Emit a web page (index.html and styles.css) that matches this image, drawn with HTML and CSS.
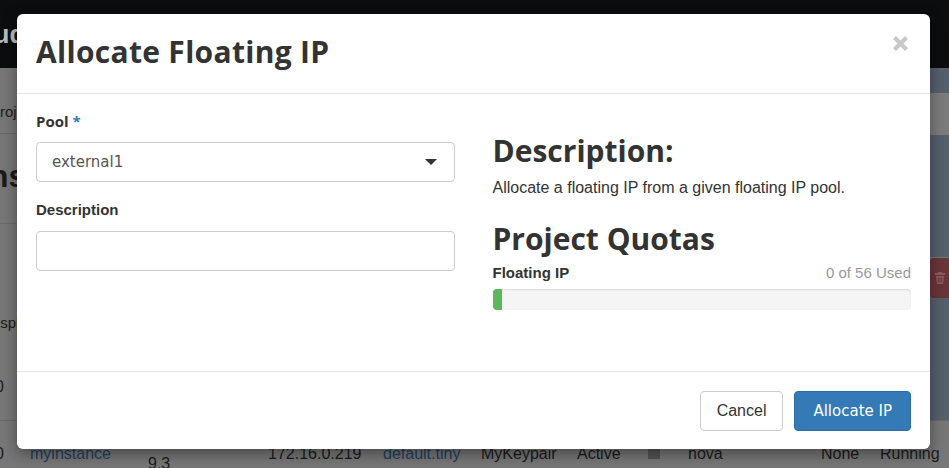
FILE: index.html
```html
<!DOCTYPE html>
<html lang="en">

<head>
    <meta charset="UTF-8">
    <meta name="viewport" content="width=device-width, initial-scale=1.0">
    <title>Allocate Floating IP</title>
    <link rel="stylesheet" href="styles.css">
</head>

<body>
    <!-- dimmed dashboard behind the modal -->
    <div class="page">
        <div class="navbar"><span class="brand">cloud</span></div>
        <div class="middle">
            <div class="main">
                <div class="crumb"><span>Project</span></div>
                <div class="page-title"><span>Instances</span></div>
                <div class="toolbar"></div>
                <div class="display-row"><span>Displaying</span></div>
                <div class="head-row"><span>0</span></div>
            </div>
            <div class="aside">
                <div class="aside-top"></div>
                <div class="aside-grey"></div>
                <div class="aside-mid"></div>
                <div class="aside-btn">
                    <svg width="10" height="12" viewBox="0 0 10 12"><rect x="0" y="1" width="10" height="2" fill="#8c5c60"/><rect x="3" y="0" width="4" height="2" fill="#8c5c60"/><path d="M1 4h8l-1 8H2z" fill="#8c5c60"/><path d="M3.5 5.5v5M5 5.5v5M6.5 5.5v5" stroke="#6a3236" stroke-width="0.8"/></svg>
                </div>
            </div>
        </div>
        <div class="table-row">
            <span class="c0">0</span>
            <span class="c-name">myinstance</span>
            <span class="c-img">9.3</span>
            <span class="c-ip">172.16.0.219</span>
            <span class="c-flavor">default.tiny</span>
            <span class="c-key">MyKeypair</span>
            <span class="c-status">Active</span>
            <span class="c-lock"></span>
            <span class="c-zone">nova</span>
            <span class="c-task">None</span>
            <span class="c-power">Running</span>
        </div>
    </div>

    <div class="modal">
        <div class="modal-header">
            <h3 class="modal-title">Allocate Floating IP</h3>
            <svg class="close" width="17" height="17" viewBox="0 0 17 17">
                <path d="M2.5 2.5l12 12M14.5 2.5l-12 12" stroke="#c8c8c8" stroke-width="4.2"/>
            </svg>
        </div>
        <div class="modal-body">
            <div class="col">
                <label class="field-label pool-label">Pool <span class="req">*</span></label>
                <div class="select">
                    <span>external1</span>
                    <span class="caret"></span>
                </div>
                <label class="field-label desc-label">Description</label>
                <div class="text-input"></div>
            </div>
            <div class="col right">
                <h3 class="side-title">Description:</h3>
                <p class="side-text">Allocate a floating IP from a given floating IP pool.</p>
                <h3 class="side-title quotas">Project Quotas</h3>
                <div class="quota-head">
                    <strong>Floating IP</strong>
                    <span class="used">0 of 56 Used</span>
                </div>
                <div class="progress">
                    <div class="progress-bar" style="width: 9px;"></div>
                </div>
            </div>
        </div>
        <div class="modal-footer">
            <button class="btn">Cancel</button>
            <button class="btn btn-primary">Allocate IP</button>
        </div>
    </div>
</body>

</html>
```

FILE: styles.css
```css
body {
    margin: 0;
    padding: 0;
    font-family: "Liberation Sans", Arial, sans-serif;
    font-size: 14px;
    color: #333;
    overflow: hidden;
}

/* page behind the modal, already dimmed */
.page {
    background-color: #777;
    height: 468px;
    color: #1b1b1b;
}

.navbar {
    height: 68px;
    background-color: #0c0d0e;
    display: flex;
    align-items: center;
}

.brand {
    margin-left: -44px;
    font-size: 26px;
    font-weight: bold;
    color: #bdbdbd;
}

.middle {
    display: flex;
    height: 352px;
}

.main {
    flex: 1;
}

.crumb {
    height: 66px;
    border-bottom: 1px solid #6a6a6a;
    font-size: 15px;
    padding-top: 35px;
    box-sizing: border-box;
}

.crumb span {
    margin-left: -10px;
}

.page-title {
    height: 90px;
    border-bottom: 1px solid #6a6a6a;
    font-size: 32px;
    font-weight: bold;
    padding-top: 24px;
    box-sizing: border-box;
}

.page-title span {
    margin-left: -20px;
}

.toolbar {
    height: 90px;
}

.display-row {
    height: 50px;
    font-size: 15px;
}

.display-row span {
    margin-left: -14px;
}

.head-row {
    height: 54px;
    font-size: 16px;
    padding-top: 14px;
    box-sizing: border-box;
}

.head-row span {
    margin-left: -5px;
}

.aside {
    width: 19px;
    display: flex;
    flex-direction: column;
    background-color: #55606d;
}

.aside-top {
    height: 25px;
}

.aside-grey {
    height: 42px;
    background-color: #7c7c7c;
}

.aside-mid {
    height: 123px;
    border-bottom: 1px solid #6f7883;
    box-sizing: border-box;
}

.aside-btn {
    height: 40px;
    background-color: #6a3438;
    border-radius: 4px 0 0 4px;
    display: flex;
    align-items: center;
    padding-left: 5px;
}

.table-row {
    height: 48px;
    border-top: 1px solid #6a6a6a;
    box-sizing: border-box;
    display: flex;
    align-items: flex-start;
    font-size: 16px;
    padding-top: 24px;
    white-space: nowrap;
}

.table-row span {
    display: inline-block;
}

.c0 { margin-left: -5px; width: 35px; }
.c-name { width: 118px; color: #1f3f60; }
.c-img { width: 120px; margin-top: 10px; }
.c-ip { width: 115px; }
.c-flavor { width: 98px; color: #1f3f60; }
.c-key { width: 96px; }
.c-status { width: 71px; }
.c-lock { width: 12px; height: 10px; background-color: #555; margin: 4px 28px 0 0; }
.c-zone { width: 133px; }
.c-task { width: 59px; }

/* modal */
.modal {
    position: absolute;
    left: 17px;
    top: 14px;
    width: 913px;
    background-color: #fff;
    border-radius: 6px;
    box-shadow: 0 5px 15px rgba(0, 0, 0, 0.4);
}

.modal-header {
    height: 80px;
    padding: 0 21px 0 19px;
    border-bottom: 1px solid #e5e5e5;
    box-sizing: border-box;
    display: flex;
    align-items: center;
    justify-content: space-between;
}

.modal-title {
    margin: 0;
    font-family: "Open Sans", sans-serif;
    font-weight: 700;
    font-size: 30px;
    line-height: 36px;
    color: #333;
    letter-spacing: 0.3px;
    padding-bottom: 4px;
}

.close {
    margin-top: -20px;
}

.modal-body {
    display: grid;
    grid-template-columns: 1fr 1fr;
    column-gap: 38px;
    padding: 17px 19px 0 19px;
    height: 277px;
    box-sizing: border-box;
}

.field-label {
    display: block;
    font-weight: bold;
    font-size: 15px;
    line-height: 20px;
    color: #333;
}

.pool-label {
    font-family: "Open Sans", sans-serif;
    margin-bottom: 11px;
}

.req {
    color: #337ab7;
}

.desc-label {
    margin-top: 18px;
    margin-bottom: 11px;
}

.select,
.text-input {
    height: 40px;
    border: 1px solid #ccc;
    border-radius: 4px;
    box-sizing: border-box;
}

.select {
    display: flex;
    align-items: center;
    justify-content: space-between;
    padding: 0 17px 0 15px;
    font-family: "DejaVu Sans", sans-serif;
    font-size: 15px;
    color: #555;
}

.caret {
    width: 0;
    height: 0;
    border-left: 6px solid transparent;
    border-right: 6px solid transparent;
    border-top: 6px solid #333;
}

.right {
    padding-top: 22px;
}

.side-title {
    margin: 0;
    font-family: "Open Sans", sans-serif;
    font-weight: 700;
    font-size: 30px;
    line-height: 36px;
    color: #333;
}

.side-text {
    margin: 8px 0 0 0;
    font-size: 16px;
    line-height: 22px;
    color: #333;
}

.quotas {
    margin-top: 22px;
}

.quota-head {
    display: flex;
    justify-content: space-between;
    margin-top: 6px;
    line-height: 20px;
    font-size: 15px;
}

.quota-head strong {
    color: #333;
}

.used {
    color: #999;
}

.progress {
    margin-top: 6px;
    height: 21px;
    background-color: #f5f5f5;
    border-radius: 4px;
    box-shadow: inset 0 1px 2px rgba(0, 0, 0, 0.1);
    overflow: hidden;
}

.progress-bar {
    height: 100%;
    background-color: #5cb85c;
}

.modal-footer {
    border-top: 1px solid #e5e5e5;
    padding: 19px 19px 18px 19px;
    display: flex;
    justify-content: flex-end;
    gap: 11px;
}

.btn {
    height: 40px;
    padding: 0 16px;
    font-family: "Liberation Sans", Arial, sans-serif;
    font-size: 16px;
    color: #333;
    background-color: #fff;
    border: 1px solid #ccc;
    border-radius: 4px;
    cursor: pointer;
}

.btn-primary {
    padding: 0 18px;
    font-family: "DejaVu Sans", sans-serif;
    font-size: 15px;
    color: #fff;
    background-color: #337ab7;
    border-color: #2e6da4;
}
```
